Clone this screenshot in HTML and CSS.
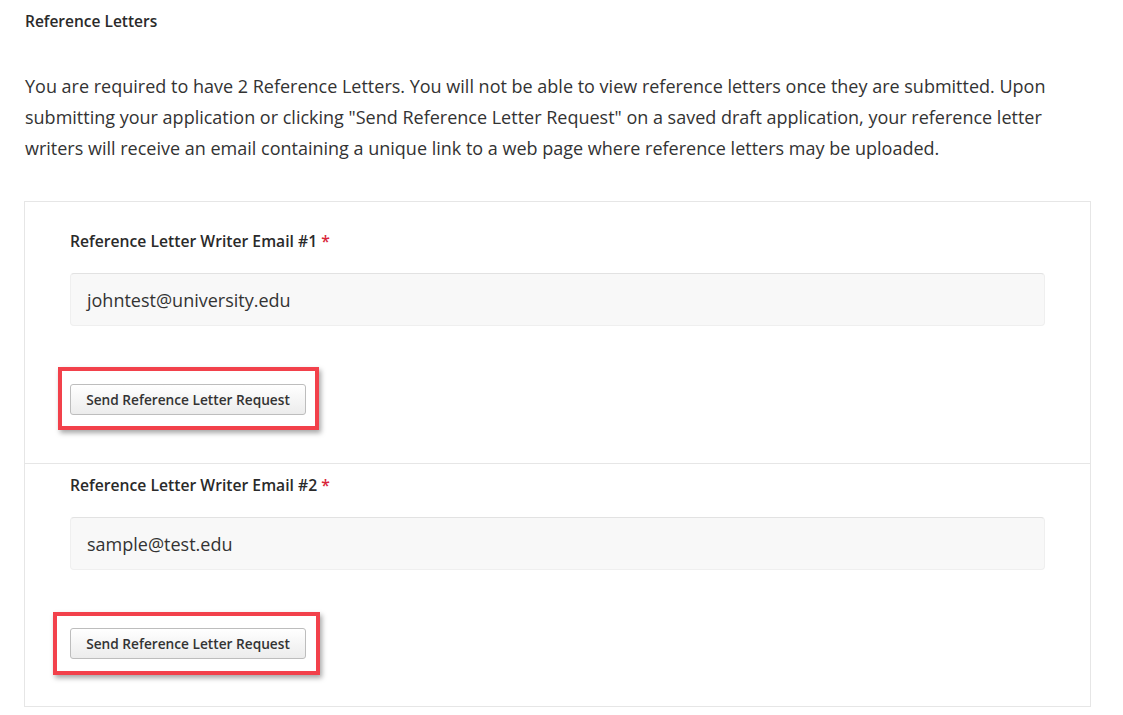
FILE: index.html
```html
<!DOCTYPE html>
<html lang="en">
<head>
<meta charset="utf-8">
<title>Reference Letters</title>
<link rel="stylesheet" href="styles.css">
</head>
<body>
<div class="page">
  <h2 class="title">Reference Letters</h2>
  <p class="intro">You are required to have 2 Reference Letters. You will not be able to view reference letters once they are submitted. Upon submitting your application or clicking "Send Reference Letter Request" on a saved draft application, your reference letter writers will receive an email containing a unique link to a web page where reference letters may be uploaded.</p>
  <div class="panel">
    <div class="section first">
      <label class="label">Reference Letter Writer Email #1 <span class="req">*</span></label>
      <div class="input">johntest@university.edu</div>
      <div class="highlight hl-one"><button class="btn">Send Reference Letter Request</button></div>
    </div>
    <div class="section second">
      <label class="label">Reference Letter Writer Email #2 <span class="req">*</span></label>
      <div class="input">sample@test.edu</div>
      <div class="highlight hl-two"><button class="btn">Send Reference Letter Request</button></div>
    </div>
  </div>
</div>
</body>
</html>
```

FILE: styles.css
```css
html, body {
  margin: 0;
  padding: 0;
  background: #ffffff;
}
body {
  font-family: "Open Sans", "Noto Sans", sans-serif;
  color: #2b2b2b;
}
.page {
  padding: 10px 0 0 25px;
  width: 1066px;
}
.title {
  margin: 0;
  font-size: 15.5px;
  font-weight: 600;
  line-height: 22px;
  color: #2a2a2a;
}
.intro {
  margin: 39px 0 0 0;
  font-size: 18px;
  line-height: 31px;
  color: #333;
  width: 1040px;
}
.panel {
  margin: 37px 0 0 -1px;
  border: 1px solid #e6e6e6;
}
.section {
  padding-left: 45px;
  padding-right: 45px;
}
.section.first {
  padding-top: 28px;
  padding-bottom: 33px;
  border-bottom: 1px solid #e6e6e6;
}
.section.second {
  padding-top: 10px;
  padding-bottom: 31px;
}
.label {
  display: block;
  font-size: 15.7px;
  font-weight: 600;
  line-height: 22px;
  color: #2a2a2a;
}
.req {
  color: #d9263a;
}
.input {
  margin-top: 21px;
  height: 53px;
  box-sizing: border-box;
  padding: 0 16px;
  display: flex;
  align-items: center;
  background: #f8f8f8;
  border: 1px solid #efefef;
  border-top-color: #e2e2e2;
  border-radius: 4px;
  font-size: 18px;
  color: #333;
}
.highlight {
  display: inline-block;
  border: 4px solid #f2414b;
  box-shadow: 2px 3px 5px rgba(0, 0, 0, 0.35);
}
.hl-one {
  margin-top: 41px;
  margin-left: -12px;
  padding: 13px 9px 11px 8px;
}
.hl-two {
  margin-top: 42px;
  margin-left: -17px;
  padding: 12px 10px 12px 13px;
}
.btn {
  display: block;
  width: 236px;
  height: 31px;
  padding: 0;
  font-family: "Open Sans", "Noto Sans", sans-serif;
  font-size: 13.7px;
  font-weight: 600;
  color: #333;
  background: linear-gradient(#ffffff, #ececec);
  border: 1px solid #bdbdbd;
  border-radius: 3px;
}
```
